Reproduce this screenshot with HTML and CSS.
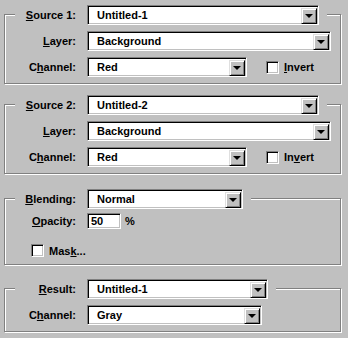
FILE: index.html
```html
<!DOCTYPE html>
<html>
<head>
<meta charset="utf-8">
<link rel="stylesheet" href="styles.css">
</head>
<body>
<div class="dlg">
  <div class="grp g1">
    <div class="row head">
      <span class="lbl"><u>S</u>ource 1:</span>
      <div class="sel w-src"><span class="val">Untitled-1</span><span class="btn"></span></div>
    </div>
    <div class="row">
      <span class="lbl"><u>L</u>ayer:</span>
      <div class="sel w-layer"><span class="val">Background</span><span class="btn"></span></div>
    </div>
    <div class="row">
      <span class="lbl">C<u>h</u>annel:</span>
      <div class="sel w-chan"><span class="val">Red</span><span class="btn"></span></div>
      <span class="chk inv"></span><span class="chklbl"><u>I</u>nvert</span>
    </div>
  </div>

  <div class="grp g2">
    <div class="row head">
      <span class="lbl"><u>S</u>ource 2:</span>
      <div class="sel w-src"><span class="val">Untitled-2</span><span class="btn"></span></div>
    </div>
    <div class="row">
      <span class="lbl"><u>L</u>ayer:</span>
      <div class="sel w-layer"><span class="val">Background</span><span class="btn"></span></div>
    </div>
    <div class="row">
      <span class="lbl">C<u>h</u>annel:</span>
      <div class="sel w-chan"><span class="val">Red</span><span class="btn"></span></div>
      <span class="chk inv"></span><span class="chklbl">In<u>v</u>ert</span>
    </div>
  </div>

  <div class="grp g3">
    <div class="row head head-blend">
      <span class="lbl"><u>B</u>lending:</span>
      <div class="sel w-blend"><span class="val">Normal</span><span class="btn"></span></div>
    </div>
    <div class="row op-row">
      <span class="lbl"><u>O</u>pacity:</span>
      <div class="field"><span class="val">50</span></div>
      <span class="pct">%</span>
    </div>
    <div class="row mask-row">
      <span class="chk"></span><span class="chklbl">Mas<u>k</u>...</span>
    </div>
  </div>

  <div class="grp g4">
    <div class="row head head-res">
      <span class="lbl"><u>R</u>esult:</span>
      <div class="sel w-res"><span class="val">Untitled-1</span><span class="btn"></span></div>
    </div>
    <div class="row">
      <span class="lbl">C<u>h</u>annel:</span>
      <div class="sel w-res2"><span class="val">Gray</span><span class="btn"></span></div>
    </div>
  </div>
</div>
</body>
</html>
```

FILE: styles.css
```css
html, body {
  margin: 0;
  padding: 0;
  background: #c0c0c0;
}
body {
  font: bold 11px "Liberation Sans", Arial, sans-serif;
  color: #000;
  width: 348px;
  height: 338px;
  overflow: hidden;
}
.dlg {
  padding-top: 14px;
}
.grp {
  margin-left: 4px;
  width: 337px;
  box-sizing: border-box;
  border: 1px solid #808080;
  box-shadow: 1px 1px 0 #fff, inset 1px 1px 0 #fff;
  padding-bottom: 6px;
}
.g2 { margin-top: 20px; }
.g3 { margin-top: 24px; padding-bottom: 7px; }
.g4 { margin-top: 23px; }

.row {
  display: flex;
  align-items: center;
  margin-left: 10px;
  margin-top: 6px;
  height: 20px;
}
.head {
  margin-top: -10px;
  background: #c0c0c0;
  padding-right: 8px;
  width: max-content;
}
.lbl {
  width: 61px;
  text-align: right;
  margin-right: 11px;
  white-space: nowrap;
}
.sel {
  height: 20px;
  box-sizing: border-box;
  background: #fff;
  border: 1px solid;
  border-color: #808080 #fff #fff #808080;
  box-shadow: inset 1px 1px 0 #000, inset -1px -1px 0 #c0c0c0;
  display: flex;
  align-items: center;
  padding: 1px 1px 1px 9px;
}
.val {
  flex: 1;
  white-space: nowrap;
}
.btn {
  width: 16px;
  height: 16px;
  box-sizing: border-box;
  background: #c0c0c0;
  border: 1px solid;
  border-color: #dfdfdf #000 #000 #dfdfdf;
  box-shadow: inset 1px 1px 0 #fff, inset -1px -1px 0 #808080;
  position: relative;
  margin-top: 1px;
}
.btn::after {
  content: "";
  position: absolute;
  left: 3px;
  top: 5px;
  border-left: 4px solid transparent;
  border-right: 4px solid transparent;
  border-top: 4px solid #000;
}
.w-src { width: 232px; }
.w-layer { width: 244px; }
.w-chan { width: 160px; }
.w-blend { width: 156px; }
.w-res { width: 181px; }
.w-res2 { width: 175px; }

.chk {
  width: 13px;
  height: 13px;
  box-sizing: border-box;
  background: #fff;
  border: 1px solid;
  border-color: #808080 #fff #fff #808080;
  box-shadow: inset 1px 1px 0 #000, inset -1px -1px 0 #c0c0c0;
}
.inv { margin-left: 19px; }
.chklbl {
  margin-left: 5px;
}
.op-row {
  margin-top: 3px;
  height: 17px;
}
.field {
  width: 34px;
  height: 16px;
  box-sizing: border-box;
  background: #fff;
  border: 1px solid;
  border-color: #808080 #fff #fff #808080;
  box-shadow: inset 1px 1px 0 #000, inset -1px -1px 0 #c0c0c0;
  padding: 1px 3px;
  display: flex;
  align-items: center;
}
.pct { margin-left: 4px; }
.mask-row {
  margin-left: 26px;
  margin-top: 15px;
  height: 13px;
}
```
